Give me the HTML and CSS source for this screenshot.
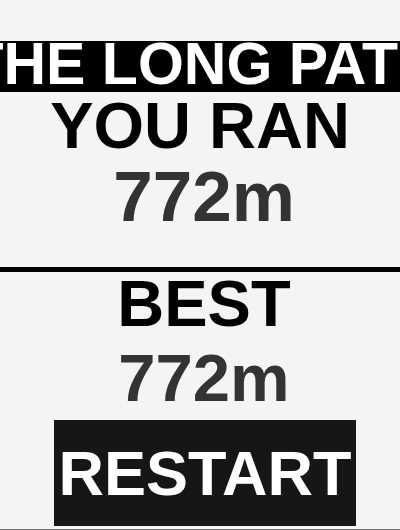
FILE: index.html
```html
<!DOCTYPE html>
<html lang="en">
<head>
<meta charset="utf-8">
<meta name="viewport" content="width=device-width, initial-scale=1">
<title>The Long Path</title>
<link rel="stylesheet" href="styles.css">
</head>
<body>
<main class="screen">
  <h1 class="title">THE LONG PATH</h1>
  <section class="result">
    <h2 class="label">YOU RAN</h2>
    <p class="distance distance-run">772m</p>
  </section>
  <section class="result result-best">
    <h2 class="label">BEST</h2>
    <p class="distance distance-best">772m</p>
  </section>
  <button class="restart" type="button">RESTART</button>
</main>
</body>
</html>
```
FILE: styles.css
```css
* {
  box-sizing: border-box;
}

body,
h1,
h2,
p {
  margin: 0;
}

body {
  background: #f4f4f4;
  color: #000;
  font-family: "Liberation Sans", Arial, sans-serif;
  font-weight: 700;
}

.screen {
  display: flex;
  flex-direction: column;
  min-height: 100vh;
  padding-top: 41px;
  overflow: hidden;
  border-bottom: 1px solid #777;
}

/* The title is wider than a narrow screen and runs off both edges. */
.title {
  display: flex;
  justify-content: center;
  padding: 0 0 5px 8px;
  background: #000;
  color: #fff;
  font-size: 59px;
  line-height: 46px;
  white-space: nowrap;
}

.result {
  padding: 2px 0 34px;
  text-align: center;
}

.result-best {
  padding: 0 0 6px 8px;
  border-top: 5px solid #000;
}

.label {
  font-size: 65px;
  line-height: 64px;
}

.distance {
  color: #333;
  line-height: 72px;
}

.distance-run {
  margin-top: 3px;
  padding-left: 8px;
  font-size: 71px;
}

.distance-best {
  margin-top: 6px;
  font-size: 67px;
}

.restart {
  align-self: center;
  margin: 0 0 3px 10px;
  padding: 20px 5px;
  border: 0;
  background: #161616;
  color: #fff;
  font: inherit;
  font-size: 63px;
  line-height: 66px;
  cursor: pointer;
}
```
